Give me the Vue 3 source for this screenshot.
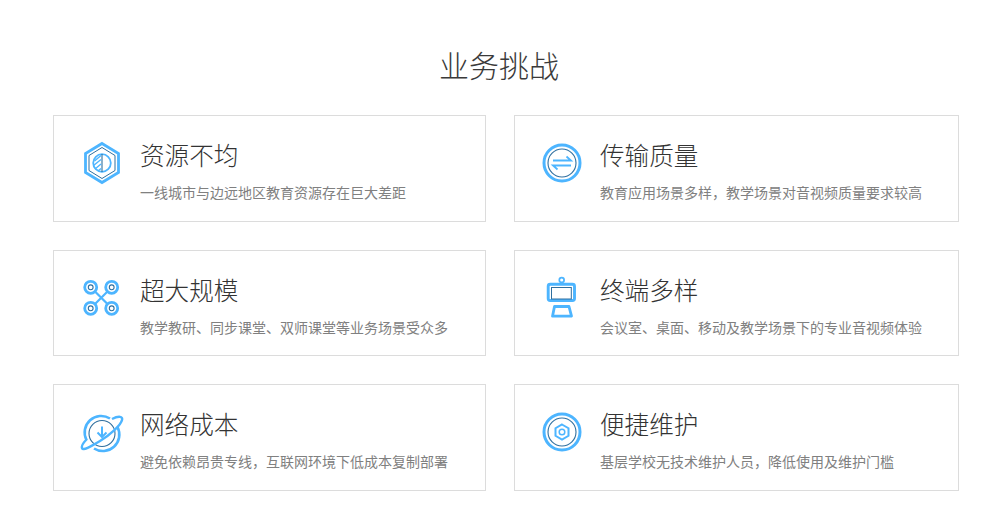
<script setup>
const base = { light: '#4db5ff', dark: '#2f6f9f' }
const cards = [
  { key: 'hex', title: '资源不均', desc: '一线城市与边远地区教育资源存在巨大差距' },
  { key: 'swap', title: '传输质量', desc: '教育应用场景多样，教学场景对音视频质量要求较高' },
  { key: 'drone', title: '超大规模', desc: '教学教研、同步课堂、双师课堂等业务场景受众多' },
  { key: 'screen', title: '终端多样', desc: '会议室、桌面、移动及教学场景下的专业音视频体验' },
  { key: 'planet', title: '网络成本', desc: '避免依赖昂贵专线，互联网环境下低成本复制部署' },
  { key: 'nut', title: '便捷维护', desc: '基层学校无技术维护人员，降低使用及维护门槛' }
]
</script>

<template>
  <main class="page">
    <h1 class="heading">业务挑战</h1>
    <section class="grid">
      <article v-for="c in cards" :key="c.key" class="card">
        <svg class="icon" viewBox="0 0 44 44" width="44" height="44" fill="none" :stroke="base.light" stroke-width="2.8">
          <template v-if="c.key === 'hex'">
            <path d="M22 2.500 38.500 12.500V31.500L22 41.500 5.500 31.500V12.500Z" />
            <path d="M22 6.500 35 14.500V29.500L22 37.500 9 29.500V14.500Z" :stroke="base.dark" stroke-width="1" />
            <circle cx="22" cy="22" r="8.800" stroke-width="1.800" />
            <path d="M22 13V31" :stroke="base.dark" stroke-width="1.100" />
            <path d="M14.500 20 21 14.500M13.500 24.500 21 18.500M15 28 21 23M18 30 21 27.500" stroke-width="1.500" />
          </template>
          <template v-else-if="c.key === 'swap'">
            <circle cx="22" cy="22" r="18" stroke-width="3" />
            <circle cx="22" cy="22" r="14" :stroke="base.dark" stroke-width="1.100" />
            <path d="M13 19.500H31L26.500 15.500" stroke-width="1.800" />
            <path d="M31 24.500H13L17.500 28.500" stroke-width="1.800" />
          </template>
          <template v-else-if="c.key === 'drone'">
            <g v-for="p in [[10.700,11.300],[31.700,11.300],[10.700,32.300],[31.700,32.300]]" :key="p[0] + '-' + p[1]">
              <circle :cx="p[0]" :cy="p[1]" r="6" stroke-width="2.800" />
              <circle :cx="p[0]" :cy="p[1]" r="2.400" :stroke="base.dark" stroke-width="1.100" />
            </g>
            <path d="M15.500 16 27 27.500M27 16 15.500 27.500" stroke-width="2.200" />
          </template>
          <template v-else-if="c.key === 'screen'">
            <circle cx="21.700" cy="4" r="2.400" stroke-width="1.700" />
            <rect x="8.200" y="8.200" width="26.300" height="16.300" rx="2" stroke-width="2.900" />
            <rect x="11.500" y="11.500" width="19.800" height="11.500" :stroke="base.dark" stroke-width="1" />
            <path d="M14.500 30.500H29L31.500 40.200H12.500Z" stroke-width="2.800" stroke-linejoin="round" />
          </template>
          <template v-else-if="c.key === 'planet'">
            <path d="M30 8.500A16.500 16.500 0 0 0 6.500 30M14 38.500A16.500 16.500 0 0 0 37.500 17" stroke-width="2.600" />
            <circle cx="22" cy="23.500" r="13" :stroke="base.dark" stroke-width="1.100" />
            <path d="M32 9C39 5.500 43 6.500 42 10C41 15 30 25 20 31C10 37 3 41 2 38C1.200 36 3 33 7 29" stroke-width="2.400" />
            <path d="M22 16.500V26.500M17.500 22.500 22 27 26.500 22.500" stroke-width="2" />
          </template>
          <template v-else>
            <circle cx="22" cy="22" r="18" stroke-width="3" />
            <circle cx="22" cy="22" r="14" :stroke="base.dark" stroke-width="1.100" />
            <path d="M22 14.500 28.500 18.250V25.750L22 29.500 15.500 25.750V18.250Z" stroke-width="2" />
            <circle cx="22" cy="22" r="2.800" stroke-width="1.500" />
          </template>
        </svg>
        <div class="copy">
          <h2 class="title">{{ c.title }}</h2>
          <p class="desc">{{ c.desc }}</p>
        </div>
      </article>
    </section>
  </main>
</template>

<style scoped>
.page {
  width: 1000px;
  height: 532px;
  padding: 45px 41px 0 53px;
  box-sizing: border-box;
  background: #fff;
  font-family: "Noto Sans CJK SC", "Noto Sans", sans-serif;
}
.heading {
  margin: 0;
  height: 39px;
  line-height: 39px;
  font-size: 30px;
  font-weight: 300;
  color: #3a3a3a;
  text-align: center;
  padding-right: 14px;
}
.grid {
  margin-top: 31px;
  display: grid;
  grid-template-columns: 433px 445px;
  grid-template-rows: 107px 106px 107px;
  column-gap: 28px;
  row-gap: 28px;
}
.card {
  display: flex;
  align-items: flex-start;
  box-sizing: border-box;
  border: 1px solid #dcdcdc;
  padding: 20px 0 0 26px;
}
.card:nth-child(even) {
  padding-left: 25px;
}
.icon {
  flex: none;
  margin-top: 5px;
  margin-right: 16px;
}
.title {
  margin: 0;
  font-size: 24.6px;
  line-height: 36px;
  font-weight: 300;
  color: #333;
}
.desc {
  margin: 10px 0 0;
  font-size: 14px;
  line-height: 20px;
  color: #808080;
  white-space: nowrap;
}
</style>
